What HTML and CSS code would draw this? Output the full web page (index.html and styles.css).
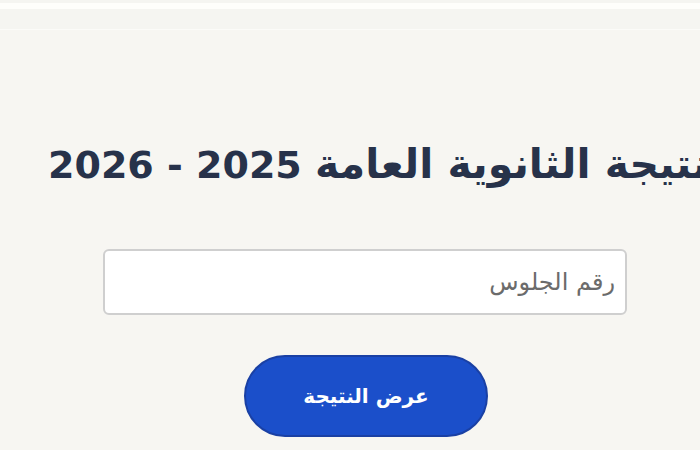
FILE: index.html
```html
<!DOCTYPE html>
<html lang="ar">
<head>
<meta charset="utf-8">
<title>نتيجة الثانوية العامة</title>
<link rel="stylesheet" href="styles.css">
</head>
<body>
<div class="page">
  <div class="topbar"><div class="topbar-line"></div></div>
  <main class="content">
    <div class="title-row">
      <h1 class="title"><span class="title-ar">نتيجة الثانوية العامة</span> 2025 - 2026</h1>
    </div>
    <form class="form">
      <input class="seat-input" type="text" placeholder="رقم الجلوس" dir="rtl">
      <button class="submit" type="button">عرض النتيجة</button>
    </form>
  </main>
</div>
</body>
</html>
```
FILE: styles.css
```css
html, body {
  margin: 0;
  padding: 0;
  width: 700px;
  height: 450px;
  overflow: hidden;
  background: #f7f6f2;
  font-family: "DejaVu Sans", "Noto Sans", sans-serif;
}
.page {
  width: 700px;
  height: 450px;
  display: flex;
  flex-direction: column;
}
.topbar {
  height: 30px;
  background: #f5f5f1;
  border-bottom: 1px solid #fbfbf8;
  padding-top: 3px;
  box-sizing: border-box;
}
.topbar-line {
  height: 6px;
  background: #fefefb;
}
.content {
  display: flex;
  flex-direction: column;
}
.title-row {
  display: flex;
  justify-content: flex-start;
  padding-left: 48px;
  padding-top: 104px;
  height: 80px;
  box-sizing: content-box;
}
.title {
  margin: 0;
  white-space: nowrap;
  direction: rtl;
  font-size: 38px;
  font-weight: bold;
  color: #27324a;
  line-height: 60px;
  flex: none;
}
.title-ar {
  font-size: 41px;
}
.form {
  display: flex;
  flex-direction: column;
  align-items: center;
  padding-top: 35px;
  gap: 40px;
}
.seat-input {
  width: 524px;
  height: 66px;
  box-sizing: border-box;
  margin-left: 30px;
  border: 2px solid #cfcfcf;
  border-radius: 6px;
  background: #ffffff;
  padding: 0 10px;
  font-family: "DejaVu Sans", sans-serif;
  font-size: 24px;
  text-align: right;
  outline: none;
}
.seat-input::placeholder {
  color: #6b6b6b;
}
.submit {
  width: 244px;
  height: 82px;
  margin-left: 32px;
  border-radius: 41px;
  border: 2px solid #1a40a4;
  background: #1b4fca;
  color: #ffffff;
  font-family: "DejaVu Sans", sans-serif;
  font-size: 20px;
  font-weight: bold;
  direction: rtl;
  cursor: pointer;
}
```
